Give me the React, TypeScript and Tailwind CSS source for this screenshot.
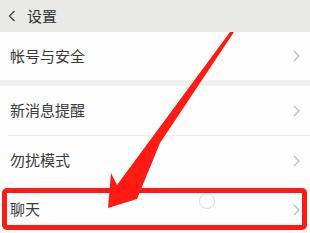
import React from "react";

const Chevron = () => (
  <svg width="7" height="12" viewBox="0 0 7 12" fill="none">
    <path d="M1 1l5 5-5 5" stroke="#bdbdbd" strokeWidth="1.3" />
  </svg>
);

const Row = ({ label, className = "" }: { label: string; className?: string }) => (
  <div className={`flex items-center justify-between pl-[10px] pr-[10px] bg-[#fdfdfd] ${className}`}>
    <span className="text-[15px] text-[#3a3a3a]">{label}</span>
    <Chevron />
  </div>
);

const App: React.FC = () => {
  return (
    <div
      className="relative w-[310px] h-[233px] overflow-hidden bg-[#fdfdfd]"
      style={{ fontFamily: '"Noto Sans CJK SC", "Noto Sans", sans-serif' }}
    >
      {/* Header */}
      <div className="h-[32px] bg-[#e9e9e7] flex items-center pl-[8px] gap-[11px]">
        <svg width="8" height="12" viewBox="0 0 8 12" fill="none">
          <path d="M6.5 1L1.5 6l5 5" stroke="#444" strokeWidth="1.4" />
        </svg>
        <span className="text-[15px] text-[#333]">设置</span>
      </div>

      <Row label="帐号与安全" className="h-[48px]" />
      <div className="h-[6px] bg-[#efefef]" />
      <Row label="新消息提醒" className="h-[49px]" />
      <div className="h-px bg-[#ececec] ml-[8px]" />
      <Row label="勿扰模式" className="h-[49px]" />
      <Row label="聊天" className="h-[49px] pl-[8px]" />

      {/* touch ripple */}
      <div className="absolute left-[199px] top-[193px] w-[16px] h-[16px] rounded-full border-[1.5px] border-[#dcdcdc]" />

      {/* annotation box */}
      <div className="absolute left-[2px] top-[188px] w-[305px] h-[42px] border-[5px] border-[#ff1a14] rounded-[5px]" />

      {/* annotation arrow */}
      <svg className="absolute left-0 top-0" width="310" height="233" viewBox="0 0 310 233">
        <polygon
          points="230,32 234,32 160,143 137,199 108,208 111,173 117,185"
          fill="#ff1a14"
        />
      </svg>
    </div>
  );
};

export default App;
